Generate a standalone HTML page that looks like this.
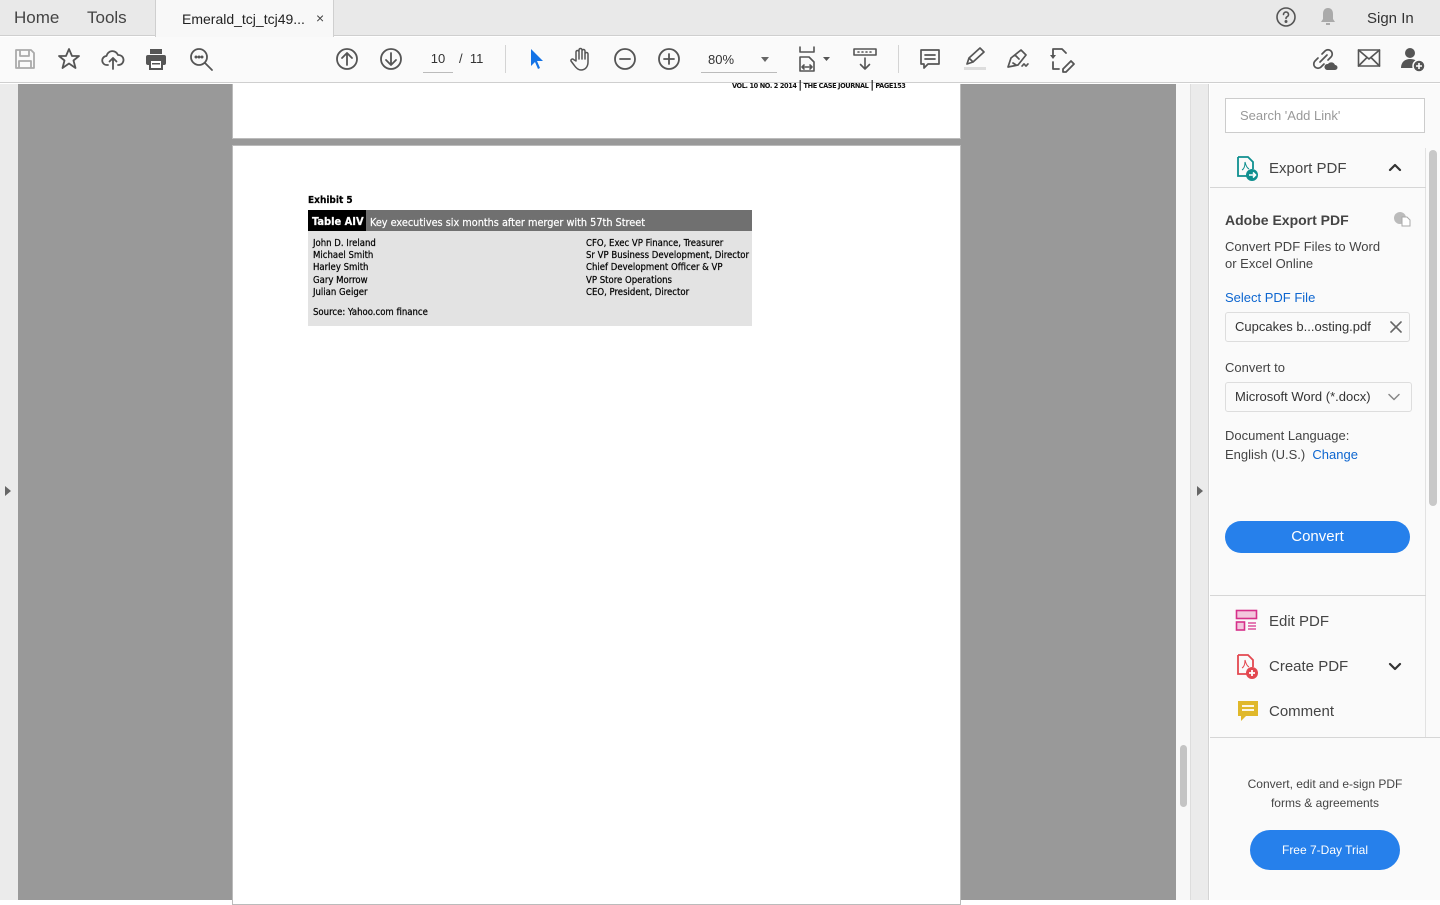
<!DOCTYPE html>
<html><head><meta charset="utf-8"><style>
*{margin:0;padding:0;box-sizing:border-box}
body{width:1440px;height:900px;overflow:hidden;position:relative;font-family:"Liberation Sans",Arial,sans-serif;background:#fff;color:#333}
.a{position:absolute}
.ic{position:absolute;fill:none;stroke:#555;stroke-width:1.8;stroke-linecap:round;stroke-linejoin:round}
.pdf{font-family:"DejaVu Sans Condensed","DejaVu Sans",sans-serif;font-size:9.5px;color:#000;position:absolute;white-space:nowrap;-webkit-text-stroke:.2px #000}
</style></head><body>
<div class="a" style="left:0;top:0;width:1440px;height:36px;background:#e9e9e9;border-bottom:1px solid #cfcfcf"></div>
<div class="a" style="left:14px;top:8px;font-size:17px;color:#444">Home</div>
<div class="a" style="left:87px;top:8px;font-size:17px;color:#444">Tools</div>
<div class="a" style="left:155px;top:0;width:179px;height:37px;background:#f8f8f8;border-left:1px solid #cfcfcf;border-right:1px solid #cfcfcf"></div>
<div class="a" style="left:182px;top:11px;font-size:14px;color:#222">Emerald_tcj_tcj49...</div>
<div class="a" style="left:316px;top:10px;font-size:14px;color:#444">×</div>
<svg class="ic" style="left:1275px;top:6px" width="22" height="22" viewBox="0 0 22 22"><circle cx="11" cy="11" r="9" stroke-width="1.6"/><path d="M8.5 8.5a2.5 2.5 0 1 1 3.5 2.3c-.8.4-1 .9-1 1.7" stroke-width="1.6"/><circle cx="11" cy="15.5" r=".6" fill="#555"/></svg>
<svg class="a" style="left:1318px;top:6px" width="20" height="22" viewBox="0 0 20 22"><path d="M10 2c-3.5 0-5 2.5-5 6v5l-2 3h14l-2-3V8c0-3.5-1.5-6-5-6z" fill="#aaa"/><rect x="8" y="17" width="4" height="2" fill="#aaa"/></svg>
<div class="a" style="left:1367px;top:10px;font-size:15px;color:#333">Sign In</div>
<div class="a" style="left:0;top:37px;width:1440px;height:46px;background:#fafafa;border-bottom:1px solid #cfcfcf"></div>
<svg class="ic" style="left:14px;top:48px;stroke:#aaa" width="22" height="22" viewBox="0 0 22 22"><path d="M2 2h15l3 3v15H2z M6 2v6h9V2 M5 20v-7h12v7"/></svg>
<svg class="ic" style="left:57px;top:47px" width="24" height="24" viewBox="0 0 24 24"><path d="M12 2l3 7h7l-5.5 4.5 2 7.5-6.5-4.5-6.5 4.5 2-7.5L2 9h7z"/></svg>
<svg class="ic" style="left:101px;top:47px" width="24" height="24" viewBox="0 0 24 24"><path d="M7 18H6a4.5 4.5 0 0 1-.5-9A6 6 0 0 1 17 8a5 5 0 0 1 1 10h-1 M12 22V11 M8.5 14.5L12 11l3.5 3.5"/></svg>
<svg class="a" style="left:144px;top:47px" width="24" height="24" viewBox="0 0 24 24"><rect x="6" y="2" width="12" height="5" fill="#555"/><rect x="2" y="8" width="20" height="10" rx="2" fill="#555"/><rect x="6" y="13" width="12" height="9" fill="#fff" stroke="#555" stroke-width="2"/><rect x="8" y="16" width="8" height="1.5" fill="#555"/></svg>
<svg class="ic" style="left:189px;top:47px" width="26" height="26" viewBox="0 0 26 26"><circle cx="10" cy="10" r="8"/><path d="M16 16l7 7"/><circle cx="7" cy="10" r=".6" fill="#555"/><circle cx="10" cy="10" r=".6" fill="#555"/><circle cx="13" cy="10" r=".6" fill="#555"/></svg>
<svg class="ic" style="left:335px;top:47px" width="24" height="24" viewBox="0 0 24 24"><circle cx="12" cy="12" r="10"/><path d="M12 18V6 M7 11l5-5 5 5"/></svg>
<svg class="ic" style="left:379px;top:47px" width="24" height="24" viewBox="0 0 24 24"><circle cx="12" cy="12" r="10"/><path d="M12 6v12 M7 13l5 5 5-5"/></svg>
<div class="a" style="left:423px;top:51px;width:30px;text-align:center;font-size:13px;color:#333">10</div>
<div class="a" style="left:423px;top:72px;width:30px;height:1px;background:#bbb"></div>
<div class="a" style="left:459px;top:51px;font-size:13px;color:#333">/ &nbsp;11</div>
<div class="a" style="left:505px;top:45px;width:1px;height:28px;background:#d4d4d4"></div>
<svg class="a" style="left:528px;top:48px" width="18" height="22" viewBox="0 0 18 22"><path d="M3 1v17l4-4 3 7 2-1-3-7h6z" fill="#1473e6"/></svg>
<svg class="ic" style="left:568px;top:46px" width="26" height="26" viewBox="0 0 26 26"><path d="M8 15V6a1.5 1.5 0 0 1 3 0v7V4a1.5 1.5 0 0 1 3 0v9V5a1.5 1.5 0 0 1 3 0v8V8a1.5 1.5 0 0 1 3 0v8c0 5-3 8-7 8-3 0-5-2-7-5l-3-4a1.5 1.5 0 0 1 2.5-1.5z" stroke-width="1.5"/></svg>
<svg class="ic" style="left:613px;top:47px" width="24" height="24" viewBox="0 0 24 24"><circle cx="12" cy="12" r="10"/><path d="M7 12h10"/></svg>
<svg class="ic" style="left:657px;top:47px" width="24" height="24" viewBox="0 0 24 24"><circle cx="12" cy="12" r="10"/><path d="M7 12h10 M12 7v10"/></svg>
<div class="a" style="left:708px;top:52px;font-size:13px;color:#333">80%</div>
<div class="a" style="left:761px;top:57px;border-left:4px solid transparent;border-right:4px solid transparent;border-top:5px solid #666"></div>
<div class="a" style="left:701px;top:72px;width:76px;height:1px;background:#bbb"></div>
<svg class="ic" style="left:797px;top:45px" width="36" height="28" viewBox="0 0 36 28"><path d="M3 2v5h14V2 M3 26V12h9l5 5v9z M5 22h10 M5 22l2-2 M5 22l2 2 M15 22l-2-2 M15 22l-2 2" stroke-width="1.6"/><path d="M26 12h7l-3.5 4z" fill="#555" stroke="none"/></svg>
<svg class="ic" style="left:852px;top:46px" width="26" height="26" viewBox="0 0 26 26"><rect x="2" y="3" width="22" height="6" stroke-width="1.6"/><path d="M6 6h1 M10 6h1 M14 6h1 M18 6h1 M13 12v11 M8.5 18.5L13 23l4.5-4.5" stroke-width="1.6"/></svg>
<div class="a" style="left:898px;top:45px;width:1px;height:28px;background:#d4d4d4"></div>
<svg class="ic" style="left:918px;top:47px" width="24" height="24" viewBox="0 0 24 24"><path d="M3 3h18v14H10l-4 4v-4H3z M7 8h10 M7 12h10" stroke-width="1.7"/></svg>
<svg class="ic" style="left:961px;top:46px" width="28" height="26" viewBox="0 0 28 26"><path d="M6 18l2-6 11-10 4 4-11 10z M8 12l4 4" stroke-width="1.7"/><rect x="3" y="21" width="22" height="3" fill="#ddd" stroke="none"/></svg>
<svg class="ic" style="left:1004px;top:46px" width="28" height="26" viewBox="0 0 28 26"><path d="M4 21l3-9 10-8 5 5-8 10z M9 17l3 2 M15 13l-4-4 M18 20c1 0 1-2 2-2s1 2 2 2 1-2 2-2" stroke-width="1.7"/></svg>
<svg class="ic" style="left:1048px;top:45px" width="28" height="28" viewBox="0 0 28 28"><path d="M5 12V4h9l4 4 M5 17v7h6 M15 24l8-8 3 3-8 8h-3z" stroke-width="1.8"/><path d="M2 10h6l-3 4z" fill="#555" stroke="none"/></svg>
<svg class="ic" style="left:1311px;top:46px" width="28" height="26" viewBox="0 0 28 26"><path d="M11 8l3-3a4 4 0 0 1 6 6l-3 3 M13 18l-3 3a4 4 0 0 1-6-6l3-3 M9 16l7-7" stroke-width="1.7"/><path d="M16 24a3 3 0 0 1 1-6 4 4 0 0 1 7 1 2.5 2.5 0 0 1 0 5z" fill="#555" stroke="none"/></svg>
<svg class="ic" style="left:1357px;top:48px" width="24" height="20" viewBox="0 0 24 20"><rect x="1.5" y="2" width="21" height="16" stroke-width="1.6"/><path d="M1.5 2l10.5 9 10.5-9 M1.5 18l8-8 M22.5 18l-8-8" stroke-width="1.6"/></svg>
<svg class="a" style="left:1400px;top:46px" width="28" height="28" viewBox="0 0 28 28"><circle cx="10" cy="7" r="5" fill="#555"/><path d="M1 22c0-6 4-9 9-9s7 2 8 4v5z" fill="#555"/><circle cx="19" cy="20" r="6" fill="#555" stroke="#fafafa" stroke-width="1.5"/><path d="M19 17v6 M16 20h6" stroke="#fff" stroke-width="1.6"/></svg>
<div class="a" style="left:0;top:84px;width:18px;height:816px;background:#ebebeb"></div>
<div class="a" style="left:5px;top:486px;border-top:5px solid transparent;border-bottom:5px solid transparent;border-left:6px solid #666"></div>
<div class="a" style="left:18px;top:84px;width:1158px;height:816px;background:#999"></div>
<div class="a" style="left:232px;top:84px;width:729px;height:55px;background:#fff;border:1px solid #bbb;border-top:none"></div>
<div class="a" style="left:732px;top:78px;font-family:'DejaVu Sans Condensed',sans-serif;font-size:7.3px;font-weight:bold;color:#111;letter-spacing:-.4px;white-space:nowrap">VOL. 10 NO. 2 2014 <b style="font-size:11px">|</b> THE CASE JOURNAL <b style="font-size:11px">|</b> PAGE153</div>
<div class="a" style="left:232px;top:145px;width:729px;height:760px;background:#fff;border:1px solid #bbb"></div>
<div class="pdf" style="left:308px;top:195px;font-size:10px;font-weight:bold">Exhibit 5</div>
<div class="a" style="left:308px;top:210px;width:444px;height:116px;background:#e3e3e3"></div>
<div class="a" style="left:308px;top:210px;width:444px;height:21px;background:#707070"></div>
<div class="a" style="left:308px;top:210px;width:58px;height:21px;background:#000"></div>
<div class="pdf" style="left:312px;top:215px;color:#fff;-webkit-text-stroke:.2px #fff;font-size:11px;font-weight:bold">Table AIV</div>
<div class="pdf" style="left:370px;top:216px;color:#fff;-webkit-text-stroke:.2px #fff;font-size:10.8px">Key executives six months after merger with 57th Street</div>
<div class="pdf" style="left:313px;top:238px;line-height:12.2px">John D. Ireland<br>Michael Smith<br>Harley Smith<br>Gary Morrow<br>Julian Geiger</div>
<div class="pdf" style="left:586px;top:238px;line-height:12.2px">CFO, Exec VP Finance, Treasurer<br>Sr VP Business Development, Director<br>Chief Development Officer &amp; VP<br>VP Store Operations<br>CEO, President, Director</div>
<div class="pdf" style="left:313px;top:307px">Source: Yahoo.com finance</div>
<div class="a" style="left:1176px;top:84px;width:15px;height:816px;background:#f8f8f8;border-right:1px solid #ddd"></div>
<div class="a" style="left:1180px;top:745px;width:7px;height:62px;background:#c4c4c4;border-radius:4px"></div>
<div class="a" style="left:1191px;top:84px;width:18px;height:816px;background:#ebebeb;border-right:1px solid #d4d4d4"></div>
<div class="a" style="left:1197px;top:486px;border-top:5px solid transparent;border-bottom:5px solid transparent;border-left:6px solid #666"></div>
<div class="a" style="left:1210px;top:84px;width:230px;height:816px;background:#fafafa"></div>
<div class="a" style="left:1425px;top:148px;width:1px;height:590px;background:#e2e2e2"></div>
<div class="a" style="left:1429px;top:150px;width:8px;height:356px;background:#c8c8c8;border-radius:4px"></div>
<div class="a" style="left:1225px;top:98px;width:200px;height:35px;background:#fff;border:1px solid #ccc"></div>
<div class="a" style="left:1240px;top:108px;font-size:13px;color:#999">Search 'Add Link'</div>
<div class="a" style="left:1210px;top:187px;width:216px;height:1px;background:#d6d6d6"></div>
<svg class="a" style="left:1236px;top:156px" width="24" height="26" viewBox="0 0 24 26"><path d="M2 1h10l5 5v7" fill="none" stroke="#0f8f8f" stroke-width="1.8"/><path d="M2 1v19h9" fill="none" stroke="#0f8f8f" stroke-width="1.8"/><path d="M6 14c2-1 3-4 3-8 1 4 2 6 4 7" fill="none" stroke="#0f8f8f" stroke-width="1"/><circle cx="16" cy="19" r="6" fill="#0f8f8f"/><path d="M13 19h6 M17 16.5l2.5 2.5-2.5 2.5" stroke="#fff" stroke-width="1.6" fill="none"/></svg>
<div class="a" style="left:1269px;top:160px;font-size:15px;color:#444">Export PDF</div>
<svg class="ic" style="left:1388px;top:162px;stroke:#333;stroke-width:2.2" width="14" height="10" viewBox="0 0 14 10"><path d="M2 8l5-5 5 5"/></svg>
<div class="a" style="left:1225px;top:212px;font-size:14px;font-weight:bold;color:#444">Adobe Export PDF</div>
<svg class="a" style="left:1393px;top:211px" width="18" height="16" viewBox="0 0 18 16"><circle cx="7" cy="7" r="6" fill="#bbb"/><path d="M9 6h5l3 3v6H9z" fill="#fff" stroke="#aaa"/></svg>
<div class="a" style="left:1225px;top:238px;font-size:13px;color:#444;line-height:17px">Convert PDF Files to Word<br>or Excel Online</div>
<div class="a" style="left:1225px;top:290px;font-size:13px;color:#0d66d0">Select PDF File</div>
<div class="a" style="left:1225px;top:312px;width:185px;height:30px;background:#fafafa;border:1px solid #ddd;border-radius:3px"></div>
<div class="a" style="left:1235px;top:319px;font-size:13px;color:#333">Cupcakes b...osting.pdf</div>
<svg class="ic" style="left:1390px;top:321px;stroke:#666;stroke-width:1.6" width="12" height="12" viewBox="0 0 12 12"><path d="M1 1l10 10 M11 1L1 11"/></svg>
<div class="a" style="left:1225px;top:360px;font-size:13px;color:#444">Convert to</div>
<div class="a" style="left:1225px;top:382px;width:187px;height:30px;background:#fafafa;border:1px solid #ddd;border-radius:3px"></div>
<div class="a" style="left:1235px;top:389px;font-size:13px;color:#333">Microsoft Word (*.docx)</div>
<svg class="ic" style="left:1388px;top:393px;stroke:#888;stroke-width:1.5" width="12" height="8" viewBox="0 0 12 8"><path d="M1 1.5l5 5 5-5"/></svg>
<div class="a" style="left:1225px;top:426px;font-size:13px;color:#444;line-height:19px">Document Language:<br>English (U.S.) &nbsp;<span style="color:#0d66d0">Change</span></div>
<div class="a" style="left:1225px;top:521px;width:185px;height:32px;background:#2680eb;border-radius:16px;color:#fff;font-size:15px;text-align:center;line-height:32px">Convert</div>
<div class="a" style="left:1210px;top:595px;width:216px;height:1px;background:#d6d6d6"></div>
<svg class="a" style="left:1235px;top:609px" width="26" height="24" viewBox="0 0 26 24"><rect x="1.5" y="1.5" width="20" height="8" fill="#f3c6dd" stroke="#d6308a" stroke-width="1.6"/><rect x="1.5" y="13" width="8" height="8" fill="#f3c6dd" stroke="#d6308a" stroke-width="1.6"/><path d="M13 14h8 M13 17h8 M13 20h8" stroke="#d6308a" stroke-width="1.2"/></svg>
<div class="a" style="left:1269px;top:613px;font-size:15px;color:#444">Edit PDF</div>
<svg class="a" style="left:1236px;top:654px" width="26" height="26" viewBox="0 0 26 26"><path d="M2 1h10l5 5v7 M2 1v19h9" fill="none" stroke="#e34850" stroke-width="1.8"/><path d="M6 14c2-1 3-4 3-8 1 4 2 6 4 7" fill="none" stroke="#e34850" stroke-width="1"/><circle cx="16" cy="19" r="6" fill="#e34850"/><path d="M16 16v6 M13 19h6" stroke="#fff" stroke-width="1.8"/></svg>
<div class="a" style="left:1269px;top:658px;font-size:15px;color:#444">Create PDF</div>
<svg class="ic" style="left:1388px;top:662px;stroke:#333;stroke-width:2.2" width="14" height="10" viewBox="0 0 14 10"><path d="M2 2l5 5 5-5"/></svg>
<svg class="a" style="left:1237px;top:700px" width="22" height="22" viewBox="0 0 22 22"><path d="M1 1h20v15H9l-5 5v-5H1z" fill="#e0b82a"/><path d="M5 6h12 M5 10h12" stroke="#fff" stroke-width="1.8"/></svg>
<div class="a" style="left:1269px;top:703px;font-size:15px;color:#444">Comment</div>
<div class="a" style="left:1210px;top:737px;width:230px;height:1px;background:#d6d6d6"></div>
<div class="a" style="left:1210px;top:775px;width:230px;text-align:center;font-size:12px;color:#444;line-height:19px">Convert, edit and e-sign PDF<br>forms &amp; agreements</div>
<div class="a" style="left:1250px;top:830px;width:150px;height:40px;background:#2680eb;border-radius:20px;color:#fff;font-size:12px;text-align:center;line-height:40px">Free 7-Day Trial</div>
</body></html>
